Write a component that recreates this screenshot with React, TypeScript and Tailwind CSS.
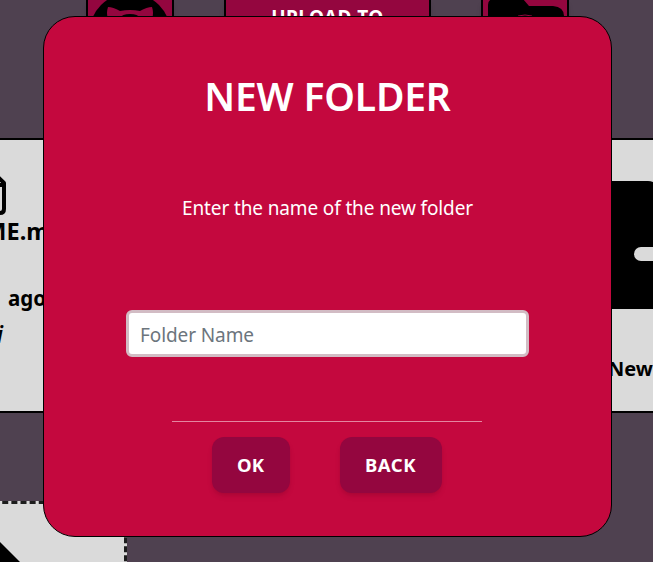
import React from "react";

function Toolbar() {
  return (
    <div className="flex h-[60px] gap-[50px] pl-[86px]">
      <div className="w-[88px] border-x-2 border-black bg-[#94063f] shadow-md">
        <svg viewBox="0 0 84 60" className="block h-[60px] w-[84px]">
          <circle cx="42" cy="34" r="41" fill="#000" />
          <path
            d="M20 7q5 0 12 4q10-2 20 0q7-4 12-4q2 6 0 12v15h-44V19q-2-6 0-12Z"
            fill="#94063f"
          />
          <path d="M32 18q2-4 10-4q8 0 10 4Z" fill="#000" />
        </svg>
      </div>
      <div className="w-[207px] border-x-2 border-black bg-[#94063f] pt-[4px] text-center text-[19px] leading-[27px] font-bold tracking-[0.4px] text-white shadow-md">
        UPLOAD TO
      </div>
      <div className="w-[88px] border-x-2 border-black bg-[#94063f] shadow-md">
        <svg viewBox="0 0 84 60" className="block h-[60px] w-[84px]">
          <path d="M5 60V5q0-6 6-6h29l6 7h24q11 1 11 10v44Z" fill="#000" />
          <path d="M35 16q7-2 14 0" stroke="#94063f" fill="none" />
        </svg>
      </div>
    </div>
  );
}

function FileRow() {
  return (
    <div className="mt-[78px] flex h-[275px] justify-between overflow-hidden">
      <div className="ml-[-130px] w-[250px] shrink-0 border-2 border-black bg-[#dadada] text-black">
        <svg
          viewBox="0 0 40 40"
          className="mt-[36px] ml-[98px] block h-[40px] w-[40px] overflow-visible"
          fill="none"
          stroke="#000"
          strokeWidth="4"
          strokeLinejoin="round"
        >
          <path d="M4-2h21l9 9v26q0 4-4 4H4Z" />
          <path d="M22-2v11h12" />
        </svg>
        <div className="mt-[-2px] flex h-[36px] w-[192px] items-center justify-end text-[23.5px] font-bold whitespace-nowrap">
          README.md
        </div>
        <div className="mt-[30px] flex h-[36px] w-[174px] items-center justify-end text-[20.5px] font-bold whitespace-nowrap [word-spacing:3px]">
          2 days ago
        </div>
        <div className="mt-[-1px] flex h-[38px] w-[131px] items-center justify-end text-[23px] font-semibold italic">
          Fiji
        </div>
      </div>
      <div className="mr-[-70px] w-[200px] shrink-0 border-2 border-black bg-[#dadada] text-black">
        <svg viewBox="0 0 160 128" className="mt-[41px] ml-[18px] block h-[128px] w-[160px]">
          <path d="M0 0h105q10 0 16 16h23q16 0 16 16v96H0Z" fill="#000" />
          <rect x="91" y="66" width="64" height="14" rx="7" fill="#dadada" />
        </svg>
        <div className="mt-[45px] ml-[83px] text-[20px] leading-[30px] font-bold whitespace-nowrap">
          New Folder
        </div>
      </div>
    </div>
  );
}

function DropZone() {
  return (
    <div className="mt-[88px] ml-[-80px] h-[160px] w-[207px] border-[3px] border-dashed border-[#1d1d1d] bg-[#dadada]">
      <svg viewBox="0 0 120 80" className="mt-[35px] ml-[57px] block h-[80px] w-[120px]">
        <path d="M0 24L19 2L97 80H0Z" fill="#000" />
      </svg>
    </div>
  );
}

function NewFolderDialog() {
  return (
    <div className="absolute top-[16px] left-[43px] flex h-[521px] w-[569px] flex-col items-center rounded-[32px] border border-black bg-[#c4083e] text-white">
      <h1 className="mt-[49px] h-[60px] text-[39px] leading-[60px] font-semibold tracking-[-0.2px] whitespace-nowrap">
        NEW FOLDER
      </h1>
      <p className="mt-[67px] h-[30px] text-[19px] leading-[30px] tracking-[-0.13px] whitespace-nowrap">
        Enter the name of the new folder
      </p>
      <input
        placeholder="Folder Name"
        className="mt-[87px] h-[47px] w-[403px] rounded-[6px] border-[3px] border-[#d2bcc4] bg-white px-[11px] pt-[2px] text-[19px] tracking-[-0.1px] text-black placeholder:text-[#6c757d]"
      />
      <div className="mt-[64px] mr-[2px] h-[2px] w-[310px] border-t border-[#e486a0]" />
      <div className="mt-[14px] mr-[2px] flex gap-[50px]">
        <button className="h-[56px] w-[78px] rounded-[12px] bg-[#94063f] pb-[1px] text-[18.5px] font-bold shadow-md">
          OK
        </button>
        <button className="h-[56px] w-[102px] rounded-[12px] bg-[#94063f] pb-[1px] text-[18.5px] font-bold tracking-[0.5px] shadow-md">
          BACK
        </button>
      </div>
    </div>
  );
}

export default function App() {
  return (
    <div className="relative h-[562px] w-[653px] overflow-hidden bg-[#4f4150] font-['Noto_Sans',sans-serif]">
      <Toolbar />
      <FileRow />
      <DropZone />
      <NewFolderDialog />
    </div>
  );
}
